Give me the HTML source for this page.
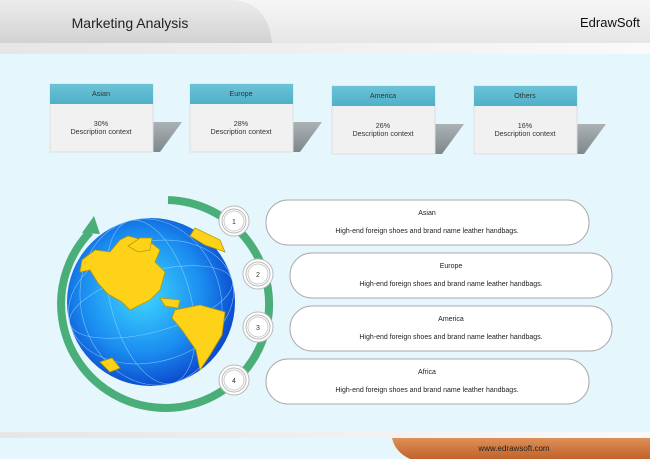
<!DOCTYPE html>
<html><head><meta charset="utf-8"><style>
body{margin:0;width:650px;height:459px;overflow:hidden;font-family:"Liberation Sans",sans-serif}
svg{display:block}
</style></head><body>
<svg width="650" height="459" viewBox="0 0 650 459" font-family="Liberation Sans, sans-serif">
<defs>
<linearGradient id="hd" x1="0" y1="0" x2="0" y2="1"><stop offset="0" stop-color="#f6f6f6"/><stop offset="1" stop-color="#e6e6e6"/></linearGradient>
<linearGradient id="tab" x1="0" y1="0" x2="0" y2="1"><stop offset="0" stop-color="#ececec"/><stop offset="1" stop-color="#d2d2d2"/></linearGradient>
<linearGradient id="org" x1="0" y1="0" x2="0" y2="1"><stop offset="0" stop-color="#de9058"/><stop offset="1" stop-color="#c0622a"/></linearGradient>
<linearGradient id="strip" x1="0" y1="0" x2="1" y2="0"><stop offset="0" stop-color="#e6e6e6"/><stop offset="1" stop-color="#fafafa"/></linearGradient>
<radialGradient id="gl" cx="0.45" cy="0.45" r="0.6"><stop offset="0" stop-color="#40d8ff"/><stop offset="0.6" stop-color="#1a8cf0"/><stop offset="1" stop-color="#0a3ec8"/></radialGradient>
<linearGradient id="ch" x1="0" y1="0" x2="0" y2="1"><stop offset="0" stop-color="#6cc2d6"/><stop offset="1" stop-color="#4fb0c8"/></linearGradient>
<linearGradient id="sh" x1="0" y1="0" x2="0" y2="1"><stop offset="0" stop-color="#aab2b6"/><stop offset="1" stop-color="#7e878b"/></linearGradient>
</defs>
<rect width="650" height="459" fill="#e5f6fd"/>
<rect width="650" height="43" fill="url(#hd)"/>
<path d="M0 0H232Q268 2 272 43H0Z" fill="url(#tab)"/>
<rect y="43" width="650" height="11" fill="url(#strip)"/>
<text x="130" y="28" font-size="14" text-anchor="middle" fill="#222">Marketing Analysis</text>
<text x="640" y="27" font-size="13" text-anchor="end" fill="#111">EdrawSoft</text>

<g font-size="7.2" text-anchor="middle" fill="#333">
<g transform="translate(50,84)"><polygon points="103,38 132,38 110,68 103,68" fill="url(#sh)"/><rect width="103" height="68" fill="#f1f1f1" stroke="#ddd"/><rect width="103" height="20" fill="url(#ch)"/><text x="51" y="12">Asian</text><text x="51" y="42">30%</text><text x="51" y="50">Description context</text></g>
<g transform="translate(190,84)"><polygon points="103,38 132,38 110,68 103,68" fill="url(#sh)"/><rect width="103" height="68" fill="#f1f1f1" stroke="#ddd"/><rect width="103" height="20" fill="url(#ch)"/><text x="51" y="12">Europe</text><text x="51" y="42">28%</text><text x="51" y="50">Description context</text></g>
<g transform="translate(332,86)"><polygon points="103,38 132,38 110,68 103,68" fill="url(#sh)"/><rect width="103" height="68" fill="#f1f1f1" stroke="#ddd"/><rect width="103" height="20" fill="url(#ch)"/><text x="51" y="12">America</text><text x="51" y="42">26%</text><text x="51" y="50">Description context</text></g>
<g transform="translate(474,86)"><polygon points="103,38 132,38 110,68 103,68" fill="url(#sh)"/><rect width="103" height="68" fill="#f1f1f1" stroke="#ddd"/><rect width="103" height="20" fill="url(#ch)"/><text x="51" y="12">Others</text><text x="51" y="42">16%</text><text x="51" y="50">Description context</text></g>
</g>

<path d="M168 200 A104 104 0 1 1 90 232" fill="none" stroke="#4aae78" stroke-width="8"/>
<polygon points="94,216 82,233 100,234" fill="#4aae78"/>
<circle cx="151" cy="302" r="84" fill="url(#gl)"/>
<g fill="none" stroke="#9fe0ff" stroke-width="0.6" opacity="0.7">
<ellipse cx="151" cy="302" rx="40" ry="84" transform="rotate(-15 151 302)"/>
<ellipse cx="151" cy="302" rx="70" ry="84" transform="rotate(-15 151 302)"/>
<ellipse cx="151" cy="302" rx="84" ry="30" transform="rotate(-15 151 302)"/>
<ellipse cx="151" cy="302" rx="84" ry="60" transform="rotate(-15 151 302)"/>
</g>
<g fill="#ffd21a" stroke="#b89a00" stroke-width="0.8">
<path d="M82 260 L95 250 L110 252 L120 240 L128 236 L150 242 L160 250 L155 262 L165 272 L160 290 L150 300 L140 305 L130 310 L122 302 L108 294 L98 283 L90 270 L80 272Z"/>
<path d="M128 246 L140 238 L152 238 L150 250 L138 252Z"/>
<path d="M195 228 L220 240 L225 252 L205 245 L190 236Z"/>
<path d="M160 298 L180 300 L178 308 L165 306Z"/>
<path d="M175 310 L200 305 L225 312 L222 335 L210 355 L200 370 L196 350 L182 330 L172 318Z"/>
<path d="M100 362 L112 358 L120 368 L110 372Z"/>
</g>
<g font-size="7" text-anchor="middle" fill="#333">
<g><circle cx="234" cy="221" r="15" fill="#fff" stroke="#bbb"/><circle cx="234" cy="221" r="12" fill="none" stroke="#bbb"/><circle cx="234" cy="221" r="10" fill="none" stroke="#ccc"/><text x="234" y="224">1</text></g>
<g><circle cx="258" cy="274" r="15" fill="#fff" stroke="#bbb"/><circle cx="258" cy="274" r="12" fill="none" stroke="#bbb"/><circle cx="258" cy="274" r="10" fill="none" stroke="#ccc"/><text x="258" y="277">2</text></g>
<g><circle cx="258" cy="327" r="15" fill="#fff" stroke="#bbb"/><circle cx="258" cy="327" r="12" fill="none" stroke="#bbb"/><circle cx="258" cy="327" r="10" fill="none" stroke="#ccc"/><text x="258" y="330">3</text></g>
<g><circle cx="234" cy="380" r="15" fill="#fff" stroke="#bbb"/><circle cx="234" cy="380" r="12" fill="none" stroke="#bbb"/><circle cx="234" cy="380" r="10" fill="none" stroke="#ccc"/><text x="234" y="383">4</text></g>
<g fill="#222">
<rect x="266" y="200" width="323" height="45" rx="22" fill="#fff" stroke="#aaa"/><text x="427" y="215">Asian</text><text x="427" y="233">High-end foreign shoes and brand name leather handbags.</text>
<rect x="290" y="253" width="322" height="45" rx="22" fill="#fff" stroke="#aaa"/><text x="451" y="268">Europe</text><text x="451" y="286">High-end foreign shoes and brand name leather handbags.</text>
<rect x="290" y="306" width="322" height="45" rx="22" fill="#fff" stroke="#aaa"/><text x="451" y="321">America</text><text x="451" y="339">High-end foreign shoes and brand name leather handbags.</text>
<rect x="266" y="359" width="323" height="45" rx="22" fill="#fff" stroke="#aaa"/><text x="427" y="374">Africa</text><text x="427" y="392">High-end foreign shoes and brand name leather handbags.</text>
</g>
</g>
<rect y="432" width="650" height="6" fill="url(#strip)"/>
<path d="M392 438H650V459H410Q395 452 392 438Z" fill="url(#org)"/>
<text x="514" y="451" font-size="8" text-anchor="middle" fill="#222">www.edrawsoft.com</text>
</svg>
</body></html>
